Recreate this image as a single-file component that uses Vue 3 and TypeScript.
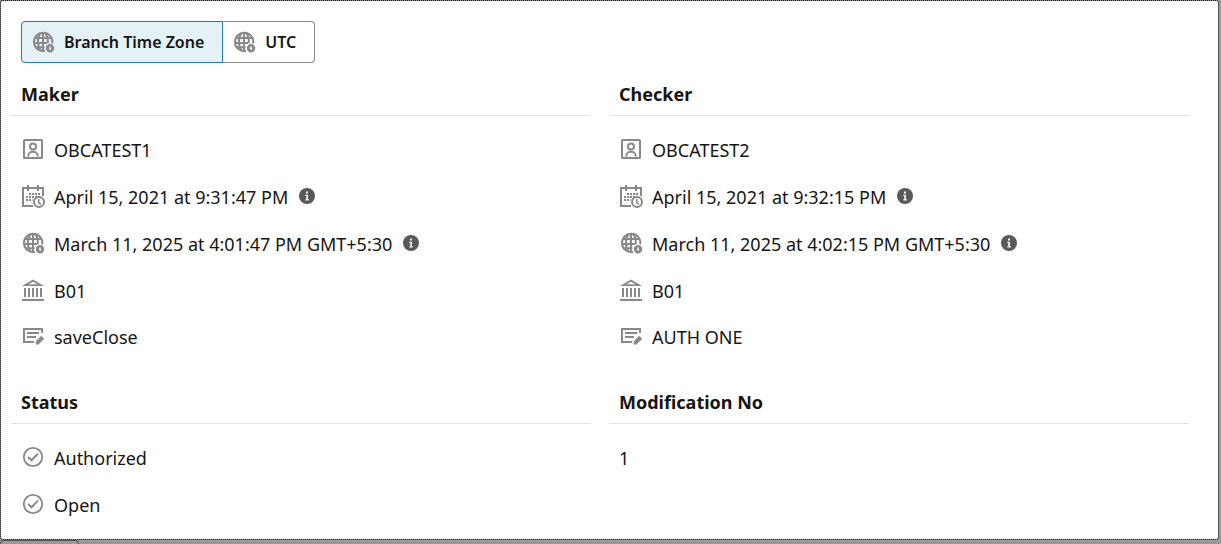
<script setup lang="ts">
import { ref } from 'vue'

type IconName = 'user' | 'calendar' | 'globe' | 'bank' | 'note' | 'check'

interface Entry {
  icon?: IconName
  text: string
  info?: boolean
}

interface Section {
  title: string
  entries: Entry[]
}

const zone = ref<'branch' | 'utc'>('branch')

const zones: { id: 'branch' | 'utc'; label: string }[] = [
  { id: 'branch', label: 'Branch Time Zone' },
  { id: 'utc', label: 'UTC' },
]

const sections: Section[] = [
  {
    title: 'Maker',
    entries: [
      { icon: 'user', text: 'OBCATEST1' },
      { icon: 'calendar', text: 'April 15, 2021 at 9:31:47 PM', info: true },
      { icon: 'globe', text: 'March 11, 2025 at 4:01:47 PM GMT+5:30', info: true },
      { icon: 'bank', text: 'B01' },
      { icon: 'note', text: 'saveClose' },
    ],
  },
  {
    title: 'Checker',
    entries: [
      { icon: 'user', text: 'OBCATEST2' },
      { icon: 'calendar', text: 'April 15, 2021 at 9:32:15 PM', info: true },
      { icon: 'globe', text: 'March 11, 2025 at 4:02:15 PM GMT+5:30', info: true },
      { icon: 'bank', text: 'B01' },
      { icon: 'note', text: 'AUTH ONE' },
    ],
  },
  {
    title: 'Status',
    entries: [
      { icon: 'check', text: 'Authorized' },
      { icon: 'check', text: 'Open' },
    ],
  },
  { title: 'Modification No', entries: [{ text: '1' }] },
]
</script>

<template>
  <svg class="defs" aria-hidden="true">
    <symbol id="i-user" viewBox="0 0 24 24">
      <rect x="3" y="3" width="18" height="18" rx="0.5" fill="none" stroke="currentColor" stroke-width="2" />
      <circle cx="12" cy="9.6" r="3" fill="none" stroke="currentColor" stroke-width="2" />
      <path d="M7.3 19.5v-.7a4.700 4 0 0 1 9.400 0v.7" fill="none" stroke="currentColor" stroke-width="2" />
    </symbol>
    <symbol id="i-calendar" viewBox="0 0 24 24">
      <path d="M12 22H2V4h20v8" fill="none" stroke="currentColor" stroke-width="2" />
      <path d="M7 1v6M17 1v6" stroke="currentColor" stroke-width="2" />
      <path d="M8 10h11.500M5 13h14.500M5 16h6.500" stroke="currentColor" stroke-width="2" stroke-dasharray="2 1" />
      <circle cx="18" cy="18" r="5" fill="none" stroke="currentColor" stroke-width="2" />
      <path d="M17.700 15v3.300l2.300 2" fill="none" stroke="currentColor" stroke-width="1.600" />
    </symbol>
    <symbol id="i-globe" viewBox="0 0 24 24">
      <g fill="none" stroke="currentColor" stroke-width="2">
        <path d="M14 20.900A9.200 9.200 0 1 1 21.200 13.500" />
        <path d="M12 2.500v19M9.500 3.200C6 7.500 6 16.500 9.800 20.800M14.200 3.200c2 2.500 2.900 6 2.600 10M4 8h16M3 13h13M4.200 17.300h9.300" />
      </g>
      <path fill="currentColor" fill-rule="evenodd" d="M19 14a4.200 4.200 0 1 0 0 8.400 4.200 4.200 0 0 0 0-8.400zm-.8 2.400h1.500v1.700l.7.800-1.200 1.200-1-1.200z" />
    </symbol>
    <symbol id="i-bank" viewBox="0 0 24 24">
      <path d="M12 1.500 23 8H1zM12 3.700 7.500 6.200h9z" fill="currentColor" fill-rule="evenodd" />
      <path d="M4 10v9M8 10v9M12 10v9M16 10v9M20 10v9" stroke="currentColor" stroke-width="2" />
      <path d="M1 22h22" stroke="currentColor" stroke-width="2" />
    </symbol>
    <symbol id="i-note" viewBox="0 0 24 24">
      <path d="M13 18H3V5h18v4" fill="none" stroke="currentColor" stroke-width="2" />
      <path d="M6 9h12M6 13h9" stroke="currentColor" stroke-width="2" />
      <path d="m20.300 12 2.700 2.800-5.600 5.400H15v-3z" fill="currentColor" stroke="currentColor" stroke-width="0.500" />
    </symbol>
    <symbol id="i-check" viewBox="0 0 24 24">
      <circle cx="12" cy="12" r="9.200" fill="none" stroke="currentColor" stroke-width="1.800" />
      <path d="m7.200 12 3.400 3.300 6.300-6.700" fill="none" stroke="currentColor" stroke-width="2" />
    </symbol>
  </svg>

  <main class="page">
    <section class="dialog" role="dialog" aria-label="Audit details">
      <div class="toggle" role="group" aria-label="Time zone">
        <button
          v-for="z in zones"
          :key="z.id"
          type="button"
          class="toggle-button"
          :class="{ selected: zone === z.id }"
          :aria-pressed="zone === z.id"
          @click="zone = z.id"
        >
          <svg class="icon" aria-hidden="true"><use href="#i-globe" /></svg>
          {{ z.label }}
        </button>
      </div>

      <div class="grid">
        <section v-for="s in sections" :key="s.title" class="group">
          <h2 class="title">{{ s.title }}</h2>
          <ul class="list">
            <li v-for="e in s.entries" :key="e.text" class="entry" :class="{ remark: e.icon === 'note' }">
              <svg v-if="e.icon" class="icon" aria-hidden="true"><use :href="'#i-' + e.icon" /></svg>
              <span>{{ e.text }}</span>
              <button v-if="e.info" type="button" class="info" aria-label="More information">
                <svg viewBox="0 0 16 16" aria-hidden="true">
                  <circle cx="8" cy="8" r="8" fill="#5b5957" />
                  <path d="M7 3.500h2v2H7zM6.200 6.700H9v4.500h1v1.300H6.200v-1.300h1V8h-1z" fill="#f1efed" />
                </svg>
              </button>
            </li>
          </ul>
        </section>
      </div>
    </section>
    <div class="backdrop-tab"></div>
  </main>
</template>

<style>
body {
  margin: 0;
  background: #999b9a;
}
</style>

<style scoped>
.defs {
  position: absolute;
  width: 0;
  height: 0;
}

.page {
  box-sizing: border-box;
  min-height: 100vh;
  padding-right: 2px;
  font-family: 'Noto Sans', 'Open Sans', sans-serif;
  color: #161513;
}

.dialog {
  box-sizing: border-box;
  padding: 20px 29px 19px 10px;
  border: 1px dotted #111;
  border-right: 1px solid #555;
  border-radius: 3px;
  background: #fff;
  background-clip: padding-box;
}

.backdrop-tab {
  box-sizing: border-box;
  width: 79px;
  height: 4px;
  border: 1px solid #555;
  border-bottom: 0;
  border-radius: 4px 4px 0 0;
}

.toggle {
  display: flex;
  margin-left: 10px;
}

.toggle-button {
  display: flex;
  align-items: center;
  gap: 9px;
  box-sizing: border-box;
  height: 42px;
  padding: 0 18px 0 9px;
  border: 1px solid #8b8987;
  border-left: 0;
  background: #fff;
  color: inherit;
  font: 600 16px/24px 'Noto Sans', 'Open Sans', sans-serif;
}

.toggle-button:first-child {
  border-left: 1px solid #8b8987;
  border-radius: 4px 0 0 4px;
}

.toggle-button:last-child {
  border-radius: 0 4px 4px 0;
}

.toggle-button.selected {
  border-color: #227e9e;
  background: #e4f1f7;
}

.grid {
  display: grid;
  grid-template-columns: 1fr 1fr;
  gap: 36px 18px;
  margin-top: 16px;
}

.title {
  margin: 0;
  padding: 0 10px 5px;
  border-bottom: 1px solid #e4e1dd;
  font-size: 18px;
  line-height: 31px;
  font-weight: 700;
}

.list {
  display: grid;
  gap: 17px;
  margin: 0;
  padding: 19px 10px 0;
  list-style: none;
  font-size: 18px;
  line-height: 30px;
}

.entry {
  display: flex;
  align-items: center;
}

.entry.remark {
  line-height: 28px;
}

.icon {
  flex: none;
  width: 24px;
  height: 24px;
  color: #8b8987;
}

.entry .icon {
  margin: 0 9px 2px 0;
}

.info {
  width: 16px;
  height: 16px;
  margin: 0 0 2px 11px;
  padding: 0;
  border: 0;
  background: none;
}

.info svg {
  display: block;
  width: 16px;
  height: 16px;
}
</style>
